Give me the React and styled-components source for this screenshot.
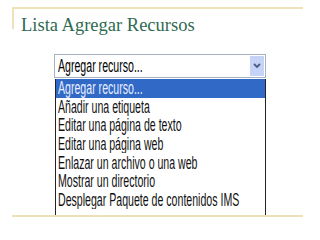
import styled, { createGlobalStyle } from "styled-components";

const GlobalStyle = createGlobalStyle`
  html, body {
    margin: 0;
    padding: 0;
    background: #ffffff;
  }
  body {
    width: 320px;
    height: 240px;
    overflow: hidden;
  }
`;

const Slide = styled.div`
  width: 291px;
  margin: 7px 0 0 12px;
`;

const Header = styled.div`
  height: 22px;
  box-sizing: border-box;
  padding: 7px 0 0 7px;
  border-top: 2px solid #efe2b8;
  border-left: 2px solid #efe2b8;
`;

const Title = styled.h1`
  margin: 0;
  font-family: "Liberation Serif", "Times New Roman", serif;
  font-weight: normal;
  font-size: 18.5px;
  line-height: 18px;
  color: #2f6a52;
  white-space: nowrap;
`;

const Body = styled.div`
  height: 188px;
  padding: 25px 0 0 42px;
  border-bottom: 2px solid #eee0b6;
  box-sizing: border-box;
  overflow: hidden;
`;

const SelectBox = styled.div`
  display: flex;
  align-items: stretch;
  width: 212px;
  height: 24px;
  box-sizing: border-box;
  border: 1px solid #a6b1c1;
  background: #ffffff;
`;

const SelectValue = styled.div`
  flex: 1;
  display: flex;
  align-items: center;
  padding-left: 3px;
  overflow: hidden;
`;

const ArrowButton = styled.div`
  width: 14px;
  margin: 1px;
  display: flex;
  align-items: center;
  justify-content: center;
  background: #c4d3f6;
`;

const Options = styled.ul`
  list-style: none;
  margin: 1px 0 0 1px;
  padding: 0;
  width: 211px;
  box-sizing: border-box;
  border: 1px solid #222222;
  border-bottom: none;
  border-top-width: 0;
  height: 200px;
`;

const Option = styled.li`
  height: 18.6px;
  display: flex;
  align-items: center;
  padding-left: 2px;
  overflow: hidden;
  white-space: nowrap;
  background: ${(p) => (p.$active ? "#3169c6" : "transparent")};
  color: ${(p) => (p.$active ? "#e8efff" : "#111111")};
`;

const Label = styled.span`
  display: inline-block;
  font-family: "Liberation Sans", Arial, sans-serif;
  font-size: 17.5px;
  line-height: 18px;
  transform-origin: left center;
  transform: scaleX(0.605);
  white-space: nowrap;
`;

const items = [
  "Agregar recurso...",
  "Añadir una etiqueta",
  "Editar una página de texto",
  "Editar una página web",
  "Enlazar un archivo o una web",
  "Mostrar un directorio",
  "Desplegar Paquete de contenidos IMS",
];

export default function App() {
  return (
    <>
      <GlobalStyle />
      <Slide>
        <Header>
          <Title>Lista Agregar Recursos</Title>
        </Header>
        <Body>
          <SelectBox>
            <SelectValue>
              <Label>Agregar recurso...</Label>
            </SelectValue>
            <ArrowButton>
              <svg width="8" height="6" viewBox="0 0 8 6">
                <path d="M1 1 L4 4 L7 1" fill="none" stroke="#4a5f86" strokeWidth="1.8" />
              </svg>
            </ArrowButton>
          </SelectBox>
          <Options>
            {items.map((t, i) => (
              <Option key={t} $active={i === 0}>
                <Label>{t}</Label>
              </Option>
            ))}
          </Options>
        </Body>
      </Slide>
    </>
  );
}
